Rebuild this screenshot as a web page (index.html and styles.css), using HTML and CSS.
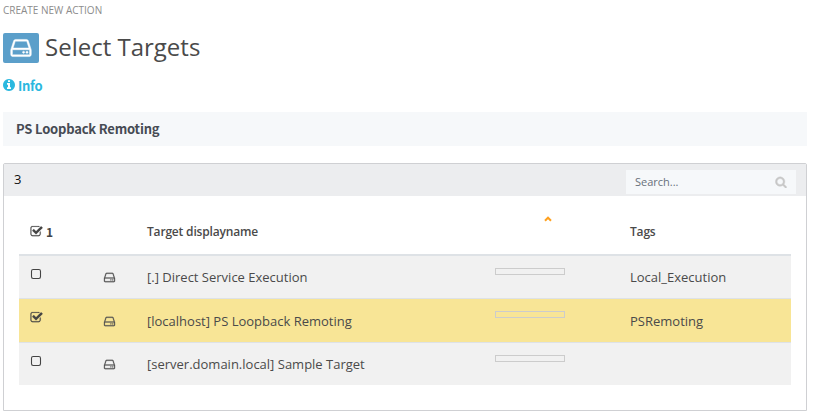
FILE: index.html
```
<!DOCTYPE html>
<html lang="en">
<head>
<meta charset="utf-8">
<title>Select Targets</title>
<link rel="stylesheet" href="styles.css">
</head>
<body>
<svg class="defs" width="0" height="0">
<symbol id="hdd" viewBox="0 0 1792 1792"><path d="M1168 1216q0 33-23.5 56.5t-56.5 23.5-56.5-23.5-23.5-56.5 23.5-56.5 56.5-23.5 56.5 23.5 23.5 56.5zm256 0q0 33-23.5 56.5t-56.5 23.5-56.5-23.5-23.5-56.5 23.5-56.5 56.5-23.5 56.5 23.5 23.5 56.5zm112 160v-320q0-13-9.5-22.5t-22.5-9.5h-1216q-13 0-22.5 9.500t-9.500 22.500v320q0 13 9.500 22.500t22.500 9.500h1216q13 0 22.500-9.500t9.500-22.500zm-1230-480h1180l-157-482q-4-13-16-21.500t-26-8.500h-782q-14 0-26 8.500t-16 21.500zm1358 160v320q0 66-47 113t-113 47h-1216q-66 0-113-47t-47-113v-320q0-25 16-75l197-606q17-53 63-86t101-33h782q55 0 101 33t63 86l197 606q16 50 16 75z"/></symbol>
<symbol id="info" viewBox="0 0 1792 1792"><path d="M1152 1376v-160q0-14-9-23t-23-9h-96v-512q0-14-9-23t-23-9h-320q-14 0-23 9t-9 23v160q0 14 9 23t23 9h96v320h-96q-14 0-23 9t-9 23v160q0 14 9 23t23 9h448q14 0 23-9t9-23zm-128-896v-160q0-14-9-23t-23-9h-192q-14 0-23 9t-9 23v160q0 14 9 23t23 9h192q14 0 23-9t9-23zm640 416q0 209-103 385.500t-279.500 279.500-385.500 103-385.500-103-279.500-279.500-103-385.500 103-385.500 279.500-279.500 385.500-103 385.500 103 279.500 279.500 103 385.500z"/></symbol>
<symbol id="search" viewBox="0 0 1792 1792"><path d="M1216 832q0-185-131.500-316.500t-316.500-131.500-316.500 131.500-131.500 316.500 131.500 316.500 316.500 131.500 316.500-131.500 131.500-316.500zm512 832q0 52-38 90t-90 38q-54 0-90-38l-343-342q-179 124-399 124-143 0-273.500-55.500t-225-150-150-225-55.500-273.500 55.500-273.500 150-225 225-150 273.500-55.500 273.500 55.500 225 150 150 225 55.500 273.500q0 220-124 399l343 343q37 37 37 90z"/></symbol>
<symbol id="checked" viewBox="0 0 1792 1792"><path d="M1472 930v318q0 119-84.500 203.500t-203.500 84.500h-832q-119 0-203.500-84.500t-84.500-203.500v-832q0-119 84.500-203.500t203.500-84.500h832q63 0 117 25 15 7 18 23 3 17-9 29l-49 49q-10 10-23 10-3 0-9-2-23-6-45-6h-832q-66 0-113 47t-47 113v832q0 66 47 113t113 47h832q66 0 113-47t47-113v-254q0-13 9-22l64-64q10-10 23-10 6 0 12 3 20 8 20 29zm231-489l-814 814q-24 24-57 24t-57-24l-430-430q-24-24-24-57t24-57l110-110q24-24 57-24t57 24l263 263 647-647q24-24 57-24t57 24l110 110q24 24 24 57t-24 57z"/></symbol>
<symbol id="unchecked" viewBox="0 0 1792 1792"><rect x="207" y="207" width="1240" height="1240" rx="224" fill="none" stroke="currentColor" stroke-width="150"/></symbol>
</svg>
<div class="crumb">CREATE NEW ACTION</div>
<header class="title">
  <span class="badge"><svg class="icon"><use href="#hdd"/></svg></span>
  <h1>Select Targets</h1>
</header>
<div class="info"><svg class="icon"><use href="#info"/></svg><span>Info</span></div>
<div class="band"><span>PS Loopback Remoting</span></div>
<section class="panel">
  <div class="toolbar">
    <span class="count">3</span>
    <div class="search"><span>Search...</span><svg class="icon"><use href="#search"/></svg></div>
  </div>
  <div class="table">
    <div class="row head">
      <div class="check"><svg class="icon"><use href="#checked"/></svg><span>1</span></div>
      <div></div>
      <div>Target displayname</div>
      <div class="sort"><svg width="8" height="6" viewBox="0 0 8 6"><path d="M1 4.700L4 1.700L7 4.700" fill="none" stroke="#ffa01e" stroke-width="2"/></svg></div>
      <div>Tags</div>
    </div>
    <div class="row">
      <div class="check"><svg class="icon"><use href="#unchecked"/></svg></div>
      <div class="kind"><svg class="icon"><use href="#hdd"/></svg></div>
      <div>[.] Direct Service Execution</div>
      <div class="bar"><i></i></div>
      <div>Local_Execution</div>
    </div>
    <div class="row selected">
      <div class="check"><svg class="icon"><use href="#checked"/></svg></div>
      <div class="kind"><svg class="icon"><use href="#hdd"/></svg></div>
      <div>[localhost] PS Loopback Remoting</div>
      <div class="bar"><i></i></div>
      <div>PSRemoting</div>
    </div>
    <div class="row last">
      <div class="check"><svg class="icon"><use href="#unchecked"/></svg></div>
      <div class="kind"><svg class="icon"><use href="#hdd"/></svg></div>
      <div>[server.domain.local] Sample Target</div>
      <div class="bar"><i></i></div>
      <div></div>
    </div>
  </div>
</section>
</body>
</html>
```
FILE: styles.css
```
* { box-sizing: border-box; }
body { margin: 0; padding: 3px 7px 0 3px; background: #fff; color: #4a4a4a; font: 13px/20px "Open Sans", sans-serif; overflow: hidden; }
.defs { display: block; }
.icon { display: block; width: 13px; height: 13px; fill: currentColor; flex: none; }
.crumb { height: 15px; line-height: 15px; font-size: 10px; color: #8c8c8c; }
.title { display: flex; height: 30px; margin-top: 15px; gap: 6px; align-items: center; }
.badge { display: flex; width: 36px; height: 30px; border-radius: 2px; background: #5b9fca; color: #fff; align-items: center; justify-content: center; }
.badge .icon { width: 24px; height: 24px; stroke: currentColor; stroke-width: 35; }
h1 { margin: 0; font-size: 24px; line-height: 28px; height: 30px; font-weight: 400; color: #4a4a4a; }
.info { display: flex; height: 20px; margin-top: 12px; align-items: center; gap: 2px; color: #2bb8df; font: 600 13px/20px "Noto Sans CJK SC", sans-serif; letter-spacing: -0.3px; }
.info span { padding-top: 1px; }
.info .icon { width: 14px; height: 14px; margin-left: -1px; }
.band { height: 34px; margin-top: 17px; padding-left: 13px; background: #f6f8fa; color: #464b54; font: 700 13px/34px "Noto Sans CJK SC", sans-serif; letter-spacing: -0.19px; }
.panel { height: 248px; margin-top: 17px; border: 1px solid #cfd0d3; border-radius: 2px 2px 0 0; }
.toolbar { display: flex; height: 32px; padding: 0 10px; background: #ecedef; justify-content: space-between; }
.count { color: #111; line-height: 31px; }
.search { display: flex; width: 170px; height: 24px; margin-top: 6px; padding: 0 9px; justify-content: space-between; align-items: center; background: #f6f8fa; color: #68707a; font-size: 11px; }
.search .icon { width: 12px; height: 12px; color: #c8c8c8; stroke: currentColor; stroke-width: 60; }
.table { margin: 0 15px; }
.row { display: grid; grid-template-columns: 84px 44px 348px 135px 1fr; height: 43px; background: #f1f1f1; border-bottom: 1px solid #dee2e6; line-height: 42px; white-space: nowrap; }
.head { height: 60px; background: #fff; border-bottom: 2px solid #dee2e6; line-height: 72px; font-size: 12px; font-weight: 600; letter-spacing: -0.18px; }
.check { padding: 12px 0 0 11px; color: #444; }
.check .icon { stroke: currentColor; stroke-width: 20; }
.head .check { display: flex; gap: 3px; padding-top: 29px; font: 700 12px/14px "Noto Sans CJK SC", sans-serif; }
.sort { padding: 20px 0 0 49px; line-height: 0; }
.kind { padding: 15px 0 0; color: #505050; }
.kind .icon { stroke: currentColor; stroke-width: 25; }
.bar { line-height: 0; padding-top: 12px; }
.bar i { display: block; width: 70px; height: 7px; border: 1px solid #ccc; }
.selected { height: 44px; background: #f8e596; line-height: 44px; }
.selected .kind { padding-top: 16px; }
.last { height: 42px; border-bottom: 0; }
```
